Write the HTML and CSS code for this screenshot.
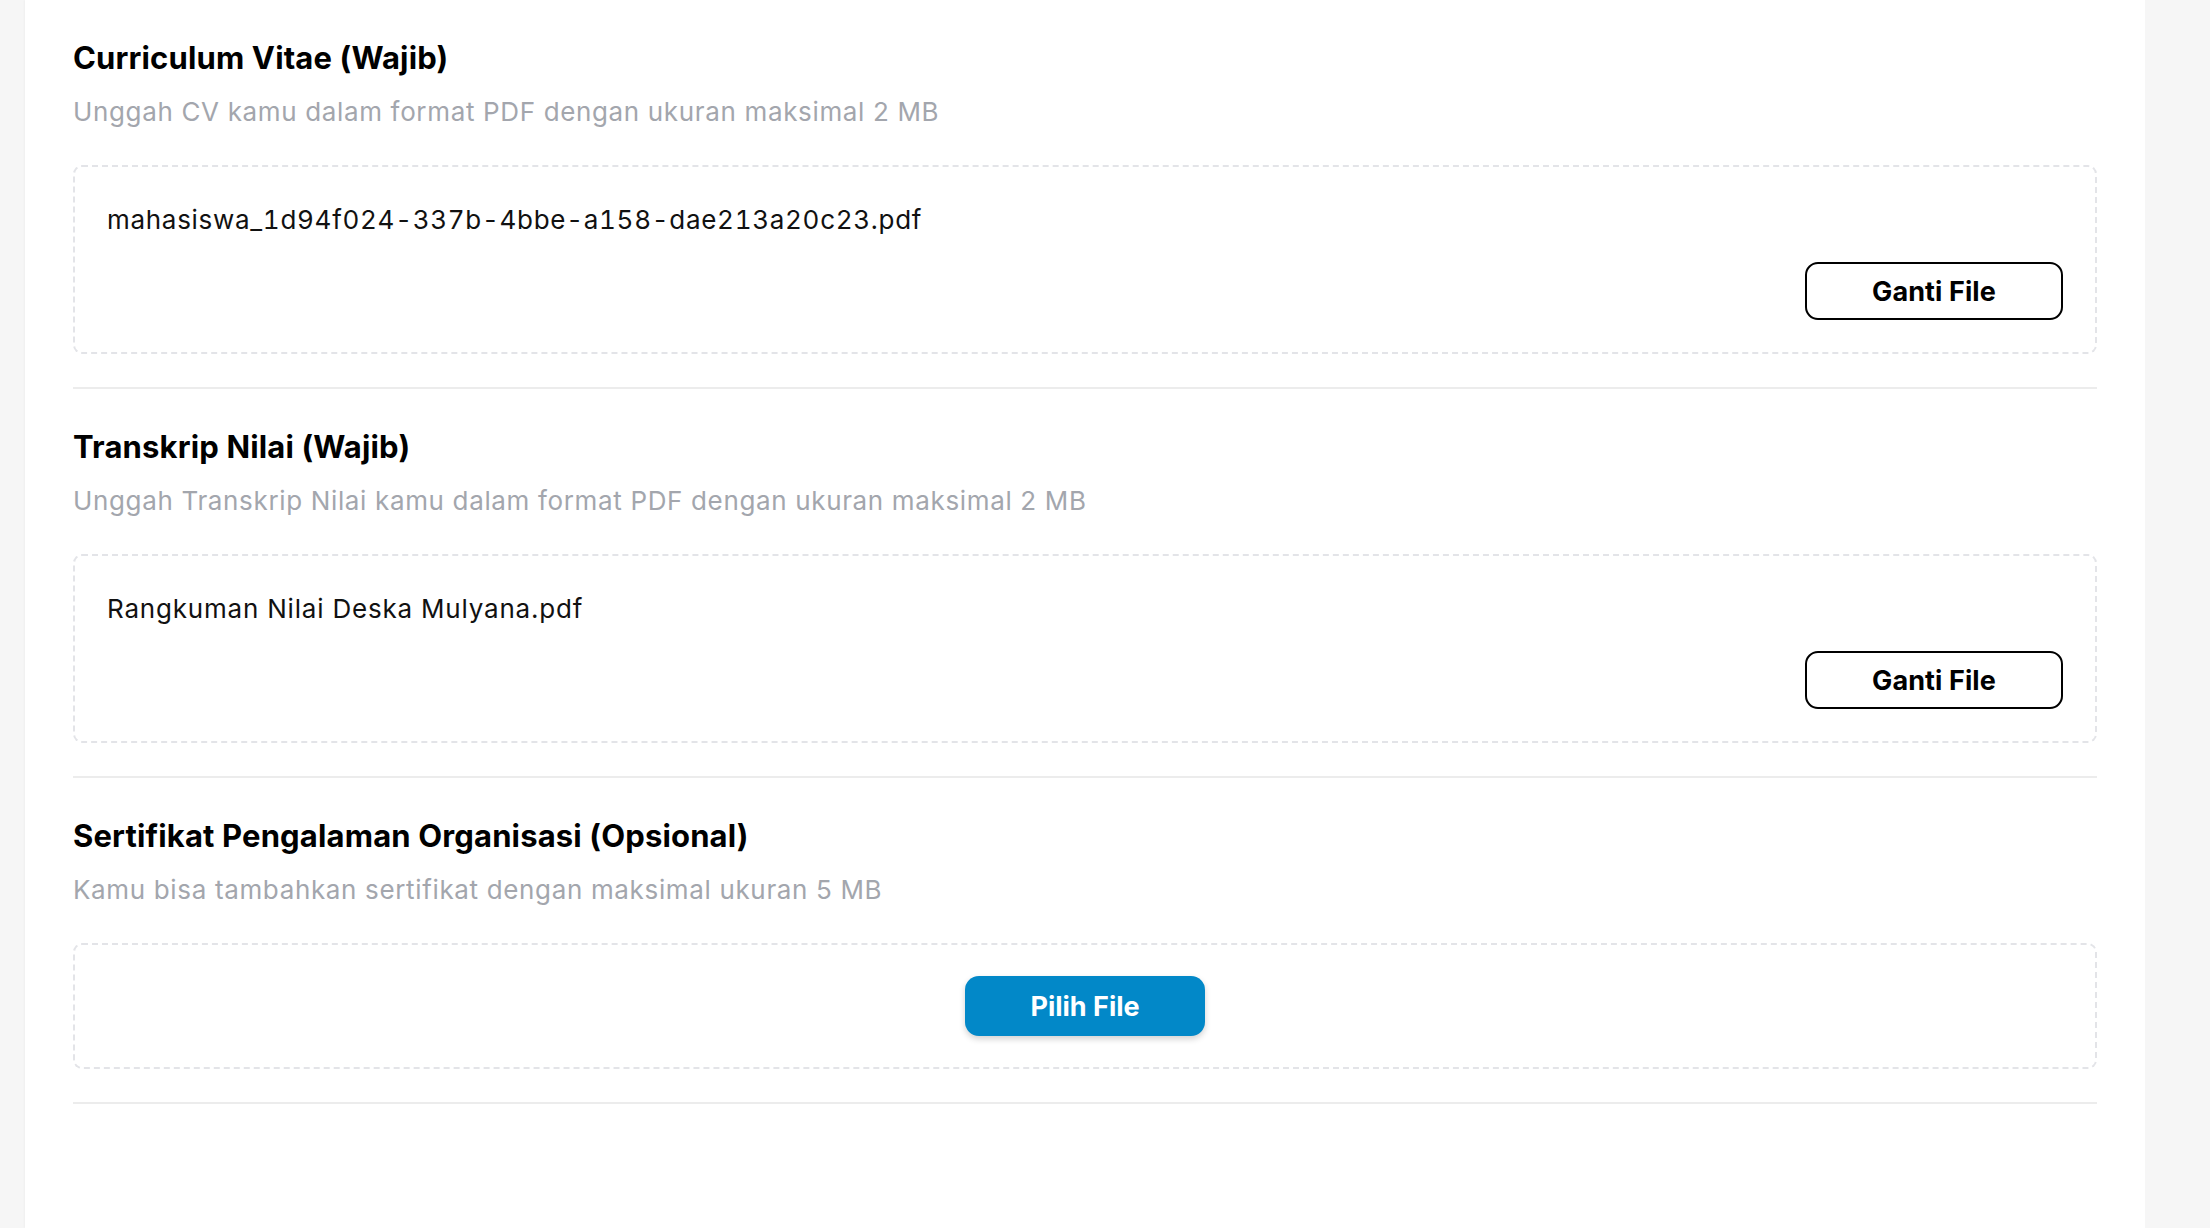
FILE: index.html
```html
<!DOCTYPE html>
<html lang="id">
<head>
<meta charset="utf-8">
<title>Unggah Dokumen</title>
<link rel="stylesheet" href="styles.css">
</head>
<body>
<main class="panel">
  <section class="doc">
    <h2 class="doc-title">Curriculum Vitae (Wajib)</h2>
    <p class="doc-desc">Unggah CV kamu dalam format PDF dengan ukuran maksimal 2 MB</p>
    <div class="drop drop-file">
      <div class="file-name file-code">mahasiswa_1d94f024-337b-4bbe-a158-dae213a20c23.pdf</div>
      <div class="drop-actions"><button class="btn-outline" type="button">Ganti File</button></div>
    </div>
  </section>
  <section class="doc">
    <h2 class="doc-title">Transkrip Nilai (Wajib)</h2>
    <p class="doc-desc">Unggah Transkrip Nilai kamu dalam format PDF dengan ukuran maksimal 2 MB</p>
    <div class="drop drop-file">
      <div class="file-name">Rangkuman Nilai Deska Mulyana.pdf</div>
      <div class="drop-actions"><button class="btn-outline" type="button">Ganti File</button></div>
    </div>
  </section>
  <section class="doc">
    <h2 class="doc-title">Sertifikat Pengalaman Organisasi (Opsional)</h2>
    <p class="doc-desc">Kamu bisa tambahkan sertifikat dengan maksimal ukuran 5 MB</p>
    <div class="drop drop-empty">
      <button class="btn-primary" type="button">Pilih File</button>
    </div>
  </section>
</main>
</body>
</html>
```

FILE: styles.css
```css
* { box-sizing: border-box; }

html, body {
  margin: 0;
  padding: 0;
  background: #f6f6f6;
  font-family: Inter, "Noto Sans", "Liberation Sans", sans-serif;
  color: #111;
}

.panel {
  margin-left: 25px;
  width: 2120px;
  min-height: 1228px;
  background: #ffffff;
  padding: 38px 48px 0 48px;
  box-shadow: -1px 0 2px rgba(0,0,0,0.03);
}

.doc {
  border-bottom: 2px solid #ececec;
  padding-bottom: 33px;
  margin-bottom: 38px;
}

.doc-title {
  margin: 0;
  font-size: 31px;
  line-height: 40px;
  font-weight: 700;
  color: #000;
  letter-spacing: 0.15px;
}

.doc-desc {
  margin: 16px 0 0 0;
  font-size: 26px;
  line-height: 36px;
  font-weight: 400;
  color: #a3a6ad;
  letter-spacing: 0.65px;
}

.drop {
  margin-top: 35px;
  border: 2px dashed #e3e4e8;
  border-radius: 9px;
}

.drop-file {
  padding: 33px 32px 32px 32px;
  display: flex;
  flex-direction: column;
}

.file-name {
  font-size: 26px;
  line-height: 40px;
  color: #111;
  letter-spacing: 0.8px;
}

.file-code {
  font-variant-numeric: tabular-nums;
  letter-spacing: 0.7px;
}

.drop-actions {
  display: flex;
  justify-content: flex-end;
  margin-top: 22px;
}

.btn-outline {
  width: 258px;
  height: 58px;
  border: 2px solid #000;
  border-radius: 13px;
  background: #fff;
  color: #000;
  font-family: inherit;
  font-size: 27px;
  font-weight: 700;
  letter-spacing: 0.1px;
  cursor: pointer;
}

.drop-empty {
  padding: 31px;
  display: flex;
  justify-content: center;
}

.btn-primary {
  width: 240px;
  height: 60px;
  border: none;
  border-radius: 14px;
  background: #0288c8;
  color: #fff;
  font-family: inherit;
  font-size: 27px;
  font-weight: 700;
  letter-spacing: 0;
  box-shadow: 0 3px 6px rgba(0,0,0,0.18);
  cursor: pointer;
}
```
